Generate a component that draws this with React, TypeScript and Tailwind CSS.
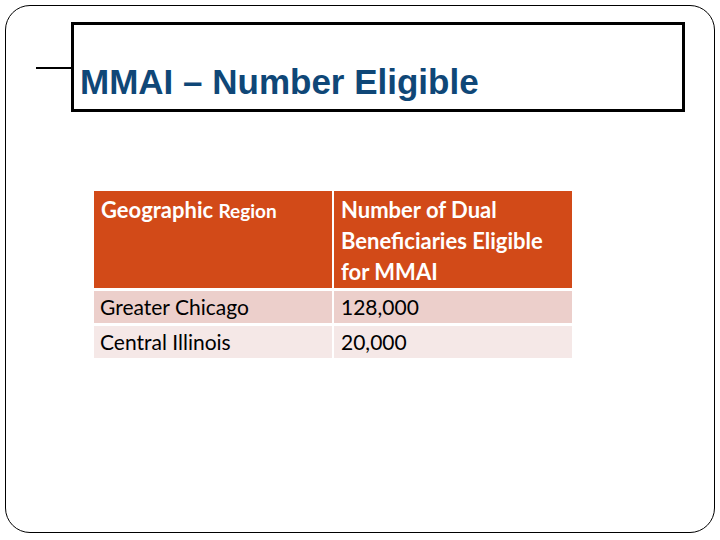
export default function App() {
  const rows = [
    { region: "Greater Chicago", count: "128,000", bg: "bg-[#eccfcb]" },
    { region: "Central Illinois", count: "20,000", bg: "bg-[#f5e8e7]" },
  ];

  return (
    <div className="w-[720px] h-[540px] bg-white p-[5px] pb-[7px]">
      <div className="h-full w-full rounded-[25px] border border-black relative">
        {/* title box */}
        <div className="flex items-center mt-[16px]">
          <div className="w-[35px] h-[2px] bg-black ml-[30px] mt-[2px]" />
          <div className="w-[614px] h-[90px] border-[3px] border-black flex items-end pb-[10px] pl-[6px]">
            <h1
              className="text-[35px] font-bold text-[#0f4777] leading-none"
              style={{ fontFamily: '"Liberation Sans", Arial, sans-serif' }}
            >
              MMAI – Number Eligible
            </h1>
          </div>
        </div>

        {/* table */}
        <div
          className="ml-[88px] mt-[79px] w-[478px] grid grid-cols-[238px_238px] gap-x-[2px] gap-y-[3px] text-[21px] text-black"
          style={{ fontFamily: "Lato, 'Open Sans', sans-serif" }}
        >
          <div className="bg-[#d24a18] h-[97px] pl-[7px] pr-[8px] pt-[3px] text-white text-[22px] font-bold leading-[31px]">
            Geographic <span className="text-[19px]">Region</span>
          </div>
          <div className="bg-[#d24a18] h-[97px] pl-[7px] pr-[8px] pt-[3px] text-white text-[22px] font-bold leading-[31px]">
            Number of Dual Beneficiaries Eligible for MMAI
          </div>
          {rows.map((r) => (
            <>
              <div key={r.region} className={`${r.bg} h-[32px] px-[6px] leading-[32px]`}>
                {r.region}
              </div>
              <div key={r.count} className={`${r.bg} h-[32px] px-[7px] leading-[32px]`}>
                {r.count}
              </div>
            </>
          ))}
        </div>
      </div>
    </div>
  );
}
